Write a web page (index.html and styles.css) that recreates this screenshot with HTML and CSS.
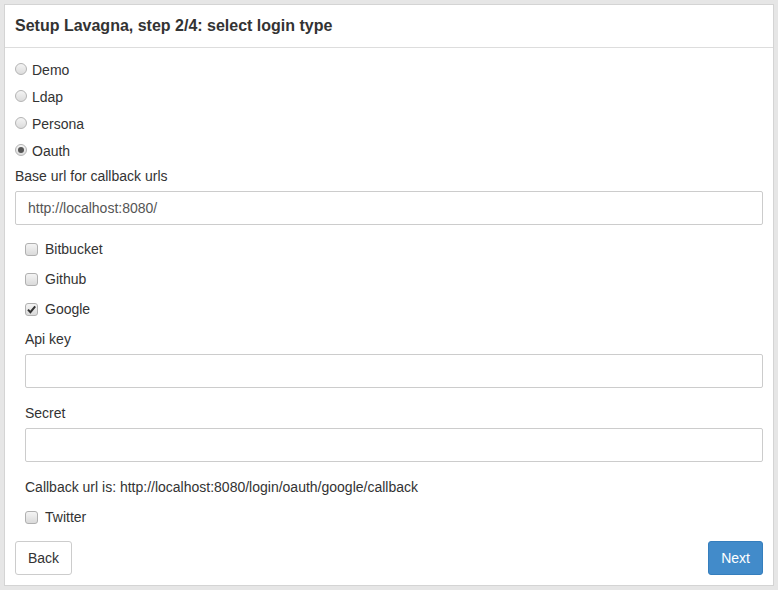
FILE: index.html
```html
<!DOCTYPE html>
<html>
<head>
<meta charset="utf-8">
<link rel="stylesheet" href="styles.css">
</head>
<body>
<div class="panel">
  <div class="panel-heading">Setup Lavagna, step 2/4: select login type</div>
  <div class="panel-body">
    <div class="radios">
      <label class="radio"><span class="rb"></span>Demo</label>
      <label class="radio"><span class="rb"></span>Ldap</label>
      <label class="radio"><span class="rb"></span>Persona</label>
      <label class="radio"><span class="rb on"></span>Oauth</label>
    </div>
    <div class="lbl base-lbl">Base url for callback urls</div>
    <div class="input">http://localhost:8080/</div>
    <div class="providers">
      <label class="check first"><span class="cb"></span>Bitbucket</label>
      <label class="check"><span class="cb"></span>Github</label>
      <label class="check"><span class="cb on"><svg viewBox="0 0 13 13" width="13" height="13"><path d="M3 6.6 L5.4 9.2 L10.2 3.4" fill="none" stroke="#333" stroke-width="2"/></svg></span>Google</label>
      <div class="lbl api-lbl">Api key</div>
      <div class="input"></div>
      <div class="lbl secret-lbl">Secret</div>
      <div class="input"></div>
      <div class="lbl callback">Callback url is: http://localhost:8080/login/oauth/google/callback</div>
      <label class="check twitter"><span class="cb"></span>Twitter</label>
    </div>
    <div class="actions">
      <button class="btn">Back</button>
      <button class="btn primary">Next</button>
    </div>
  </div>
</div>
</body>
</html>
```
FILE: styles.css
```css
html, body { margin: 0; padding: 0; }
body {
  background: #e6e6e6;
  font-family: "Liberation Sans", Arial, sans-serif;
  font-size: 14px;
  color: #333;
  padding: 4px;
  width: 778px;
  height: 590px;
  box-sizing: border-box;
}
.panel {
  background: #fff;
  border: 1px solid #d4d4d4;
  height: 582px;
  width: 770px;
  box-sizing: border-box;
  display: flex;
  flex-direction: column;
}
.panel-heading {
  height: 43px;
  box-sizing: border-box;
  border-bottom: 1px solid #ddd;
  padding: 0 10px;
  font-size: 16px;
  font-weight: bold;
  line-height: 42px;
  color: #333;
}
.panel-body {
  padding: 12px 10px 0;
  display: flex;
  flex-direction: column;
}
.radios { display: flex; flex-direction: column; gap: 7px; }
.radio, .check {
  display: flex;
  align-items: center;
  height: 20px;
  line-height: 20px;
}
.rb {
  width: 12px; height: 12px;
  box-sizing: border-box;
  border-radius: 50%;
  border: 1px solid #b4b4b4;
  background: linear-gradient(#f4f4f4, #dcdcdc);
  margin: 0 5px 0 0;
  position: relative;
  top: -1px;
}
.rb.on::after {
  content: "";
  position: absolute;
  left: 2px; top: 2px;
  width: 6px; height: 6px;
  border-radius: 50%;
  background: #555;
}
.lbl { height: 20px; line-height: 20px; }
.base-lbl { margin-top: 5px; margin-bottom: 5px; }
.input {
  height: 34px;
  box-sizing: border-box;
  border: 1px solid #ccc;
  border-radius: 2px;
  padding: 0 12px;
  line-height: 32px;
  color: #555;
}
.providers {
  padding-left: 10px;
  display: flex;
  flex-direction: column;
}
.check { margin-top: 10px; }
.check.first { margin-top: 14px; }
.cb {
  width: 13px; height: 13px;
  box-sizing: border-box;
  border: 1px solid #b0b0b0;
  border-radius: 3px;
  background: linear-gradient(#f4f4f4, #dadada);
  margin-right: 7px;
  display: flex;
  align-items: center;
  justify-content: center;
  position: relative;
}
.cb svg { position: absolute; left: -1px; top: -1px; }
.api-lbl { margin-top: 10px; margin-bottom: 5px; }
.secret-lbl { margin-top: 15px; margin-bottom: 5px; }
.callback { margin-top: 15px; }
.check.twitter { margin-top: 10px; }
.actions {
  display: flex;
  justify-content: space-between;
  margin-top: 14px;
}
.btn {
  font-family: inherit;
  font-size: 14px;
  height: 34px;
  padding: 0 12px;
  border: 1px solid #ccc;
  border-radius: 3px;
  background: #fff;
  color: #333;
  line-height: 32px;
}
.btn.primary {
  background: #428bca;
  border-color: #357ebd;
  color: #fff;
}
```
